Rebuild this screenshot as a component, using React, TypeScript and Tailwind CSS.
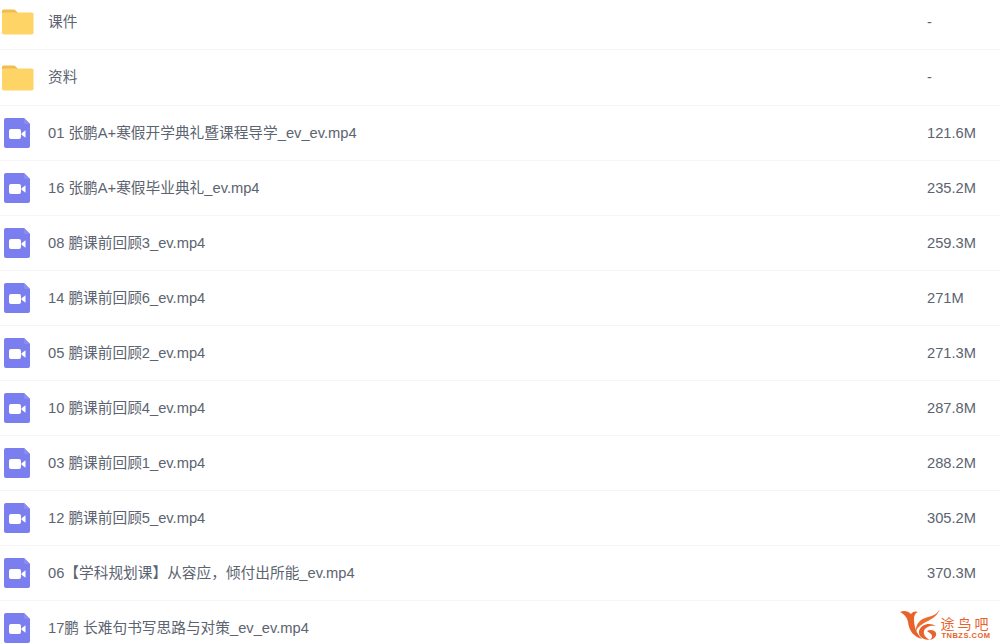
const rows: [string, string, string][] = [
  ["f", "课件", "-"],
  ["f", "资料", "-"],
  ["v", "01 张鹏A+寒假开学典礼暨课程导学_ev_ev.mp4", "121.6M"],
  ["v", "16 张鹏A+寒假毕业典礼_ev.mp4", "235.2M"],
  ["v", "08 鹏课前回顾3_ev.mp4", "259.3M"],
  ["v", "14 鹏课前回顾6_ev.mp4", "271M"],
  ["v", "05 鹏课前回顾2_ev.mp4", "271.3M"],
  ["v", "10 鹏课前回顾4_ev.mp4", "287.8M"],
  ["v", "03 鹏课前回顾1_ev.mp4", "288.2M"],
  ["v", "12 鹏课前回顾5_ev.mp4", "305.2M"],
  ["v", "06【学科规划课】从容应\uFF0C倾付出所能_ev.mp4", "370.3M"],
  ["v", "17鹏 长难句书写思路与对策_ev_ev.mp4", ""],
];

function Folder() {
  return (
    <svg width="32" height="26" viewBox="0 0 32 26" className="shrink-0 ml-[2px]">
      <path d="M0 2A1.5 1.5 0 0 1 1.500.500h10c1 0 1.800.5 2.500 1.200L16 4H0z" fill="#f0bd4f" />
      <rect x="0" y="3.500" width="31.500" height="22" rx="1.800" fill="#ffd466" />
    </svg>
  );
}

function Video() {
  return (
    <svg width="26" height="30" viewBox="0 0 26 30" className="shrink-0 ml-[4px]">
      <path d="M2 0H20l6 6v22a2 2 0 0 1-2 2H2a2 2 0 0 1-2-2V2a2 2 0 0 1 2-2z" fill="#7a7eee" />
      <path d="M20 0l6 6h-4.500A1.500 1.500 0 0 1 20 4.500z" fill="#8a8df0" />
      <rect x="5" y="11" width="12" height="10" rx="2" fill="#fff" />
      <path d="M17.500 15.200l4-3v7.600l-4-3z" fill="#fff" />
    </svg>
  );
}

function Logo() {
  return (
    <div className="absolute right-[10px] bottom-[2px] flex items-start">
      <svg width="42" height="32" viewBox="0 0 42 32" className="shrink-0">
        <path d="M0 3C4 1 8 2 11 5C13 2 16 2 18 3C15 4 14 7 14 10C14 17 16 24 22 30C14 28 9 22 8 13C7 8 4 5 0 3z" fill="#e8622c" />
        <path d="M40 0C37 8 30 11 24 14C19 17 16 20 16 24C15 15 20 10 28 8C33 7 37 5 40 0z" fill="#ec6d30" />
        <path d="M36 17C30 13 21 15 19 22C18 28 24 31 30 31C26 29 23 26 24 22C25 18 31 16 36 17z" fill="#e8622c" />
        <path d="M27 22c3-2 8-1 9 2 1 3-2 6-6 7 2-2 3-4 1-6-1-1-3-2-4-3z" fill="#e8622c" />
      </svg>
      <div className="flex flex-col items-center mt-[8px] w-[48px]">
        <span className="text-[14px] leading-[15px] tracking-[3px] text-[#e8622c] whitespace-nowrap">途鸟吧</span>
        <span className="text-[7.500px] leading-[8px] tracking-[0.500px] text-[#e8622c] font-bold whitespace-nowrap">TNBZS.COM</span>
      </div>
    </div>
  );
}

export default function App() {
  return (
    <div className="relative h-[643px] w-[1000px] overflow-hidden bg-white text-[14.700px] text-[#5c6470] font-['Liberation_Sans','Noto_Sans_CJK_SC',sans-serif]">
      <div className="-mt-[4.650px]">
        {rows.map(([kind, name, size], i) => (
          <div key={i} className="flex h-[55.100px] items-center border-b border-[#f5f5f7]">
            <div className="w-[48px] shrink-0">{kind === "f" ? <Folder /> : <Video />}</div>
            <span className="flex-1 whitespace-nowrap">{name}</span>
            <span className="w-[73px] shrink-0">{size}</span>
          </div>
        ))}
      </div>
      <Logo />
    </div>
  );
}
